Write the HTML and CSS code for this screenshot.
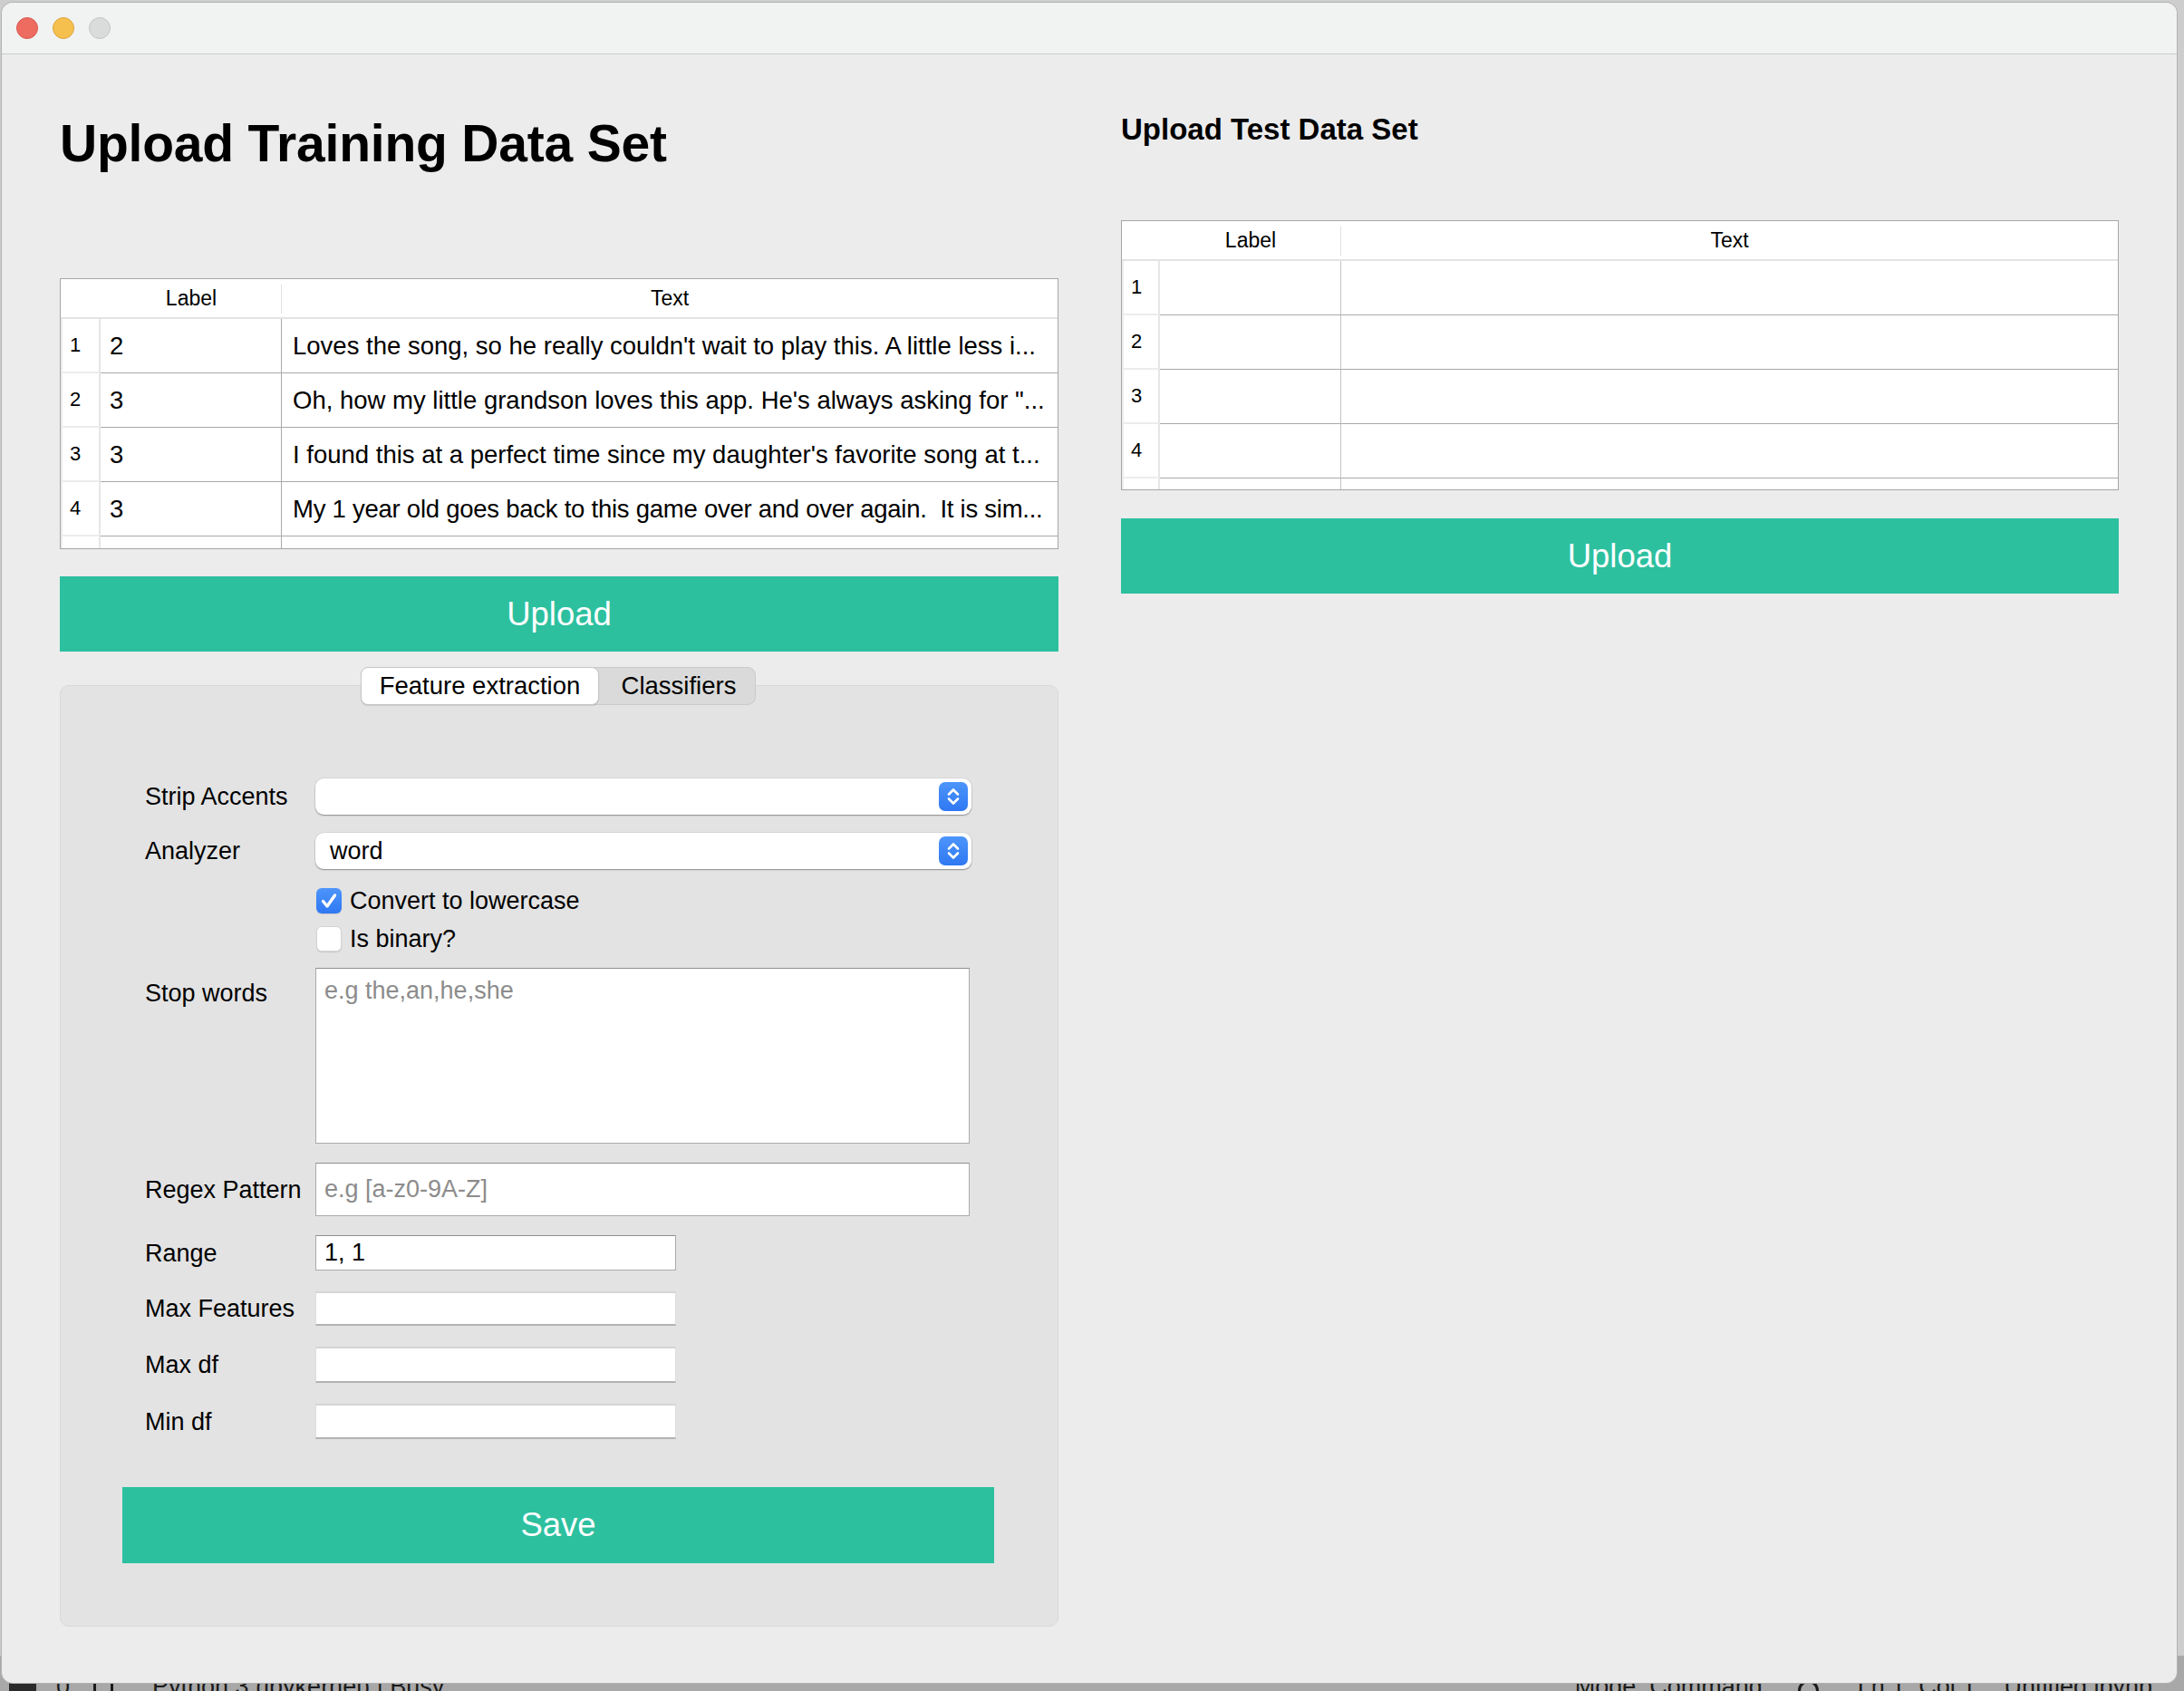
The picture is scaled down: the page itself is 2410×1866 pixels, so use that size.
FILE: index.html
```html
<!DOCTYPE html>
<html>
<head>
<meta charset="utf-8">
<link rel="stylesheet" href="styles.css">
</head>
<body>
<div class="window">
  <div class="titlebar">
    <span class="light red"></span><span class="light yellow"></span><span class="light grey"></span>
  </div>
  <div class="content">
    <section class="col">
      <h1 class="title-lg">Upload Training Data Set</h1>
      <div class="table">
        <div class="thead"><div class="corner"></div><div class="th th-label">Label</div><div class="th th-text">Text</div></div>
        <div class="tr"><div class="rh">1</div><div class="td td-label">2</div><div class="td td-text">Loves the song, so he really couldn't wait to play this. A little less i...</div></div>
        <div class="tr"><div class="rh">2</div><div class="td td-label">3</div><div class="td td-text">Oh, how my little grandson loves this app. He's always asking for "...</div></div>
        <div class="tr"><div class="rh">3</div><div class="td td-label">3</div><div class="td td-text">I found this at a perfect time since my daughter's favorite song at t...</div></div>
        <div class="tr"><div class="rh">4</div><div class="td td-label">3</div><div class="td td-text tight">My 1 year old goes back to this game over and over again.  It is sim...</div></div>
        <div class="tr partial"><div class="rh"></div><div class="td td-label"></div><div class="td td-text"></div></div>
      </div>
      <button class="btn upload">Upload</button>
      <div class="tabwidget">
        <div class="tabs"><div class="tab active">Feature extraction</div><div class="tab">Classifiers</div></div>
        <div class="panel">
          <div class="form">
            <div class="row r-strip"><label class="lbl">Strip Accents</label><div class="combo"><span class="combo-val"></span><span class="stepper"><svg width="32" height="32" viewBox="0 0 32 32"><path d="M11 13.5 L16 8.5 L21 13.5 M11 18.5 L16 23.5 L21 18.5" fill="none" stroke="#fff" stroke-width="2.6" stroke-linecap="round" stroke-linejoin="round"/></svg></span></div></div>
            <div class="row r-analyzer"><label class="lbl">Analyzer</label><div class="combo"><span class="combo-val">word</span><span class="stepper"><svg width="32" height="32" viewBox="0 0 32 32"><path d="M11 13.5 L16 8.5 L21 13.5 M11 18.5 L16 23.5 L21 18.5" fill="none" stroke="#fff" stroke-width="2.6" stroke-linecap="round" stroke-linejoin="round"/></svg></span></div></div>
            <div class="row r-cb1"><span class="lbl"></span><div class="check"><span class="box on"><svg width="28" height="28" viewBox="0 0 28 28"><path d="M7.5 14.5 L12 20 L20.5 8" fill="none" stroke="#fff" stroke-width="3.4" stroke-linecap="round" stroke-linejoin="round"/></svg></span><span class="check-text">Convert to lowercase</span></div></div>
            <div class="row r-cb2"><span class="lbl"></span><div class="check"><span class="box"></span><span class="check-text">Is binary?</span></div></div>
            <div class="row r-stop"><label class="lbl lbl-top">Stop words</label><div class="field textarea"><span class="ph">e.g the,an,he,she</span></div></div>
            <div class="row r-regex"><label class="lbl">Regex Pattern</label><div class="field line regex"><span class="ph">e.g [a-z0-9A-Z]</span></div></div>
            <div class="row r-range"><label class="lbl">Range</label><div class="field line short range"><span class="val">1, 1</span></div></div>
            <div class="row r-maxf"><label class="lbl">Max Features</label><div class="field short soft h38"></div></div>
            <div class="row r-maxdf"><label class="lbl">Max df</label><div class="field short soft h40"></div></div>
            <div class="row r-mindf"><label class="lbl">Min df</label><div class="field short soft h39"></div></div>
          </div>
          <button class="btn save">Save</button>
        </div>
      </div>
    </section>
    <section class="col">
      <h2 class="title-sm">Upload Test Data Set</h2>
      <div class="table test">
        <div class="thead"><div class="corner"></div><div class="th th-label">Label</div><div class="th th-text">Text</div></div>
        <div class="tr"><div class="rh">1</div><div class="td td-label"></div><div class="td td-text"></div></div>
        <div class="tr"><div class="rh">2</div><div class="td td-label"></div><div class="td td-text"></div></div>
        <div class="tr"><div class="rh">3</div><div class="td td-label"></div><div class="td td-text"></div></div>
        <div class="tr"><div class="rh">4</div><div class="td td-label"></div><div class="td td-text"></div></div>
        <div class="tr partial"><div class="rh"></div><div class="td td-label"></div><div class="td td-text"></div></div>
      </div>
      <button class="btn upload upload-test">Upload</button>
    </section>
  </div>
</div>
<div class="statusbar">
  <span class="sb-icon"></span>
  <span class="sb-item sb-num">0</span>
  <span class="sb-trash"></span>
  <span class="sb-item sb-kernel">Python 3 (ipykernel) | Busy</span>
  <span class="sb-spacer"></span>
  <span class="sb-item sb-mode">Mode: Command</span>
  <span class="sb-circle"></span>
  <span class="sb-item sb-ln">Ln 1, Col 1</span>
  <span class="sb-item sb-file">Untitled.ipynb</span>
</div>
</body>
</html>
```

FILE: styles.css
```css
html, body {
  margin: 0;
  padding: 0;
}
body {
  width: 2410px;
  height: 1866px;
  overflow: hidden;
  background: #cdcdcd;
  font-family: "Liberation Sans", Arial, sans-serif;
  color: #000;
}

.window {
  margin: 3px 0 0 2px;
  width: 2400px;
  height: 1854px;
  background: #ececec;
  border-radius: 12px;
  overflow: hidden;
  box-shadow: 0 0 0 1px #b3b3b3;
  display: flex;
  flex-direction: column;
  position: relative;
  z-index: 1;
}

.titlebar {
  flex: none;
  height: 56px;
  background: #f1f2f2;
  border-bottom: 1px solid #cbcbcb;
  display: flex;
  align-items: center;
  gap: 16px;
  padding-left: 16px;
}
.light {
  width: 24px;
  height: 24px;
  border-radius: 50%;
  box-sizing: border-box;
}
.light.red { background: #ee6b60; border: 1px solid #d8574c; }
.light.yellow { background: #f6c04f; border: 1px solid #dca53a; }
.light.grey { background: #dadcdc; border: 1px solid #c4c6c6; }

.content {
  display: flex;
  gap: 69px;
  padding: 0 62px 0 64px;
}
.col {
  width: 1102px;
  display: flex;
  flex-direction: column;
}
.col + .col { width: 1101px; }

.title-lg {
  margin: 65px 0 0;
  font-size: 57px;
  line-height: 67px;
  font-weight: 700;
  letter-spacing: -0.2px;
}
.title-sm {
  margin: 63px 0 0;
  font-size: 33px;
  line-height: 40px;
  font-weight: 700;
}

/* tables */
.table {
  margin-top: 115px;
  height: 299px;
  box-sizing: border-box;
  border: 1px solid #a6a6a6;
  background: #fff;
  overflow: hidden;
  display: flex;
  flex-direction: column;
}
.table.test { margin-top: 80px; height: 298px; }
.thead {
  flex: none;
  height: 42px;
  border-bottom: 2px solid #e3e3e3;
  display: flex;
}
.corner { width: 44px; flex: none; }
.th {
  font-size: 23px;
  display: flex;
  align-items: center;
  justify-content: center;
  box-sizing: border-box;
}
.th-label {
  width: 200px;
  flex: none;
  position: relative;
}
.th-label::after {
  content: "";
  position: absolute;
  right: 0;
  top: 6px;
  bottom: 4px;
  width: 1px;
  background: #e2e2e2;
}
.th-text { flex: 1; }
.table.test .corner, .table.test .rh { width: 42px; }

.tr {
  flex: none;
  height: 60px;
  display: flex;
}
.tr.partial { flex: 1; height: auto; }
.rh {
  width: 44px;
  flex: none;
  box-sizing: border-box;
  border-left: 2px solid #ececec;
  border-right: 2px solid #e6e6e6;
  border-bottom: 2px solid #ececec;
  font-size: 22px;
  display: flex;
  align-items: center;
  padding-left: 8px;
}
.td {
  box-sizing: border-box;
  border-bottom: 1px solid #a9a9a9;
  font-size: 27.5px;
  display: flex;
  align-items: center;
  white-space: pre;
  overflow: hidden;
}
.td.tight { letter-spacing: -0.25px; }
.tr.partial .td, .tr.partial .rh { border-bottom: 0; }
.td-label {
  width: 200px;
  flex: none;
  border-right: 1px solid #a9a9a9;
  padding-left: 10px;
}
.td-text {
  flex: 1;
  padding-left: 12px;
}
.table.test .td-label { border-right-color: #c4c4c4; }

/* buttons */
.btn {
  display: block;
  border: 0;
  background: #2cc09f;
  color: #fff;
  font-family: "Liberation Sans", Arial, sans-serif;
  font-size: 36.5px;
  padding: 0;
  cursor: pointer;
}
.upload {
  margin-top: 30px;
  height: 83px;
  width: 100%;
}
.upload-test { margin-top: 31px; }

/* tab widget */
.tabwidget {
  margin-top: 17px;
  display: flex;
  flex-direction: column;
}
.tabs {
  align-self: center;
  display: flex;
  height: 42px;
  margin-left: -2px;
  position: relative;
  z-index: 2;
  background: #dadada;
  border: 1px solid #cacaca;
  border-radius: 9px;
  box-sizing: border-box;
}
.tab {
  font-size: 27.5px;
  display: flex;
  align-items: center;
  justify-content: center;
  box-sizing: border-box;
}
.tab.active {
  width: 263px;
  background: #fff;
  border: 1px solid #c6c6c6;
  border-radius: 8px;
  margin: -1px 0 -1px -1px;
  box-shadow: 0 1px 1px rgba(0,0,0,0.12);
}
.tab:not(.active) { width: 172px; padding-left: 4px; }

.panel {
  margin-top: -22px;
  height: 1039px;
  box-sizing: border-box;
  background: #e3e3e3;
  border: 1px solid #d8d8d8;
  border-radius: 10px;
  display: flex;
  flex-direction: column;
}

.form {
  padding-left: 93px;
  display: flex;
  flex-direction: column;
}
.row {
  display: flex;
  align-items: center;
}
.lbl {
  width: 188px;
  flex: none;
  font-size: 27px;
  line-height: 30px;
}
.lbl-top { align-self: flex-start; margin-top: 13px; }
.r-strip { margin-top: 102px; }
.r-analyzer { margin-top: 20px; }
.r-cb1 { margin-top: 21px; height: 28px; }
.r-cb2 { margin-top: 14px; height: 28px; }
.r-stop { margin-top: 18px; }
.r-regex { margin-top: 21px; }
.r-range { margin-top: 21px; }
.r-maxf { margin-top: 23px; }
.r-maxdf { margin-top: 23px; }
.r-mindf { margin-top: 23px; }

.combo {
  width: 724px;
  height: 40px;
  box-sizing: border-box;
  background: #fff;
  border-radius: 9px;
  box-shadow: 0 1px 1.5px rgba(0,0,0,0.35), 0 0 0 0.5px rgba(0,0,0,0.1);
  display: flex;
  align-items: center;
  justify-content: space-between;
  padding: 0 4px 0 16px;
  font-size: 27px;
}
.stepper {
  width: 32px;
  height: 32px;
  border-radius: 7px;
  background: linear-gradient(#4d95fa, #2f78f3);
  display: flex;
}

.check {
  display: flex;
  align-items: center;
  gap: 9px;
  margin-left: 1px;
  height: 28px;
}
.box {
  width: 28px;
  height: 28px;
  box-sizing: border-box;
  border-radius: 6px;
  background: #fff;
  border: 1px solid #d4d4d4;
  box-shadow: 0 1px 1px rgba(0,0,0,0.12);
  display: flex;
}
.box.on {
  background: linear-gradient(#4d95fa, #2f78f3);
  border: 0;
}
.check-text { font-size: 27px; line-height: 28px; }

.field {
  box-sizing: border-box;
  background: #fff;
  font-size: 27px;
}
.textarea {
  width: 722px;
  height: 194px;
  border: 1px solid #ababab;
  border-top-color: #8e8e8e;
  padding: 9px 0 0 9px;
}
.line {
  display: flex;
  align-items: center;
  padding-left: 9px;
  border: 1px solid #ababab;
  border-top-color: #8e8e8e;
}
.regex { width: 722px; height: 59px; }
.short { width: 398px; }
.range { height: 39px; }
.soft {
  border-top: 2px solid #d5d5d5;
  border-bottom: 2px solid #b3b3b3;
  border-left: 1px solid #dedede;
  border-right: 1px solid #dedede;
}
.h38 { height: 38px; }
.h40 { height: 40px; }
.h39 { height: 39px; }
.ph { color: #8c8c8c; }
.val { color: #000; }

.save {
  margin: 53px 0 0 68px;
  width: 962px;
  height: 84px;
}

/* background app status bar peeking below window */
.statusbar {
  height: 40px;
  margin-top: -30px;
  padding-top: 19px;
  background: #a8a8a8;
  display: flex;
  align-items: flex-start;
  font-size: 27px;
  color: #1a1a1a;
  line-height: 31px;
}
.sb-icon {
  width: 30px;
  height: 40px;
  margin: 0 0 0 10px;
  background: #2a2a2a;
}
.sb-num { margin-left: 22px; }
.sb-trash {
  width: 22px;
  height: 26px;
  margin: 6px 0 0 26px;
  box-sizing: border-box;
  border: 3px solid #1a1a1a;
  border-radius: 2px;
}
.sb-kernel { margin-left: 43px; }
.sb-spacer { flex: 1; }
.sb-circle {
  width: 23px;
  height: 23px;
  margin: 8px 0 0 39px;
  box-sizing: border-box;
  border: 3px solid #1a1a1a;
  border-radius: 50%;
}
.sb-ln { margin-left: 43px; }
.sb-file { margin: 0 35px 0 31px; }
```
